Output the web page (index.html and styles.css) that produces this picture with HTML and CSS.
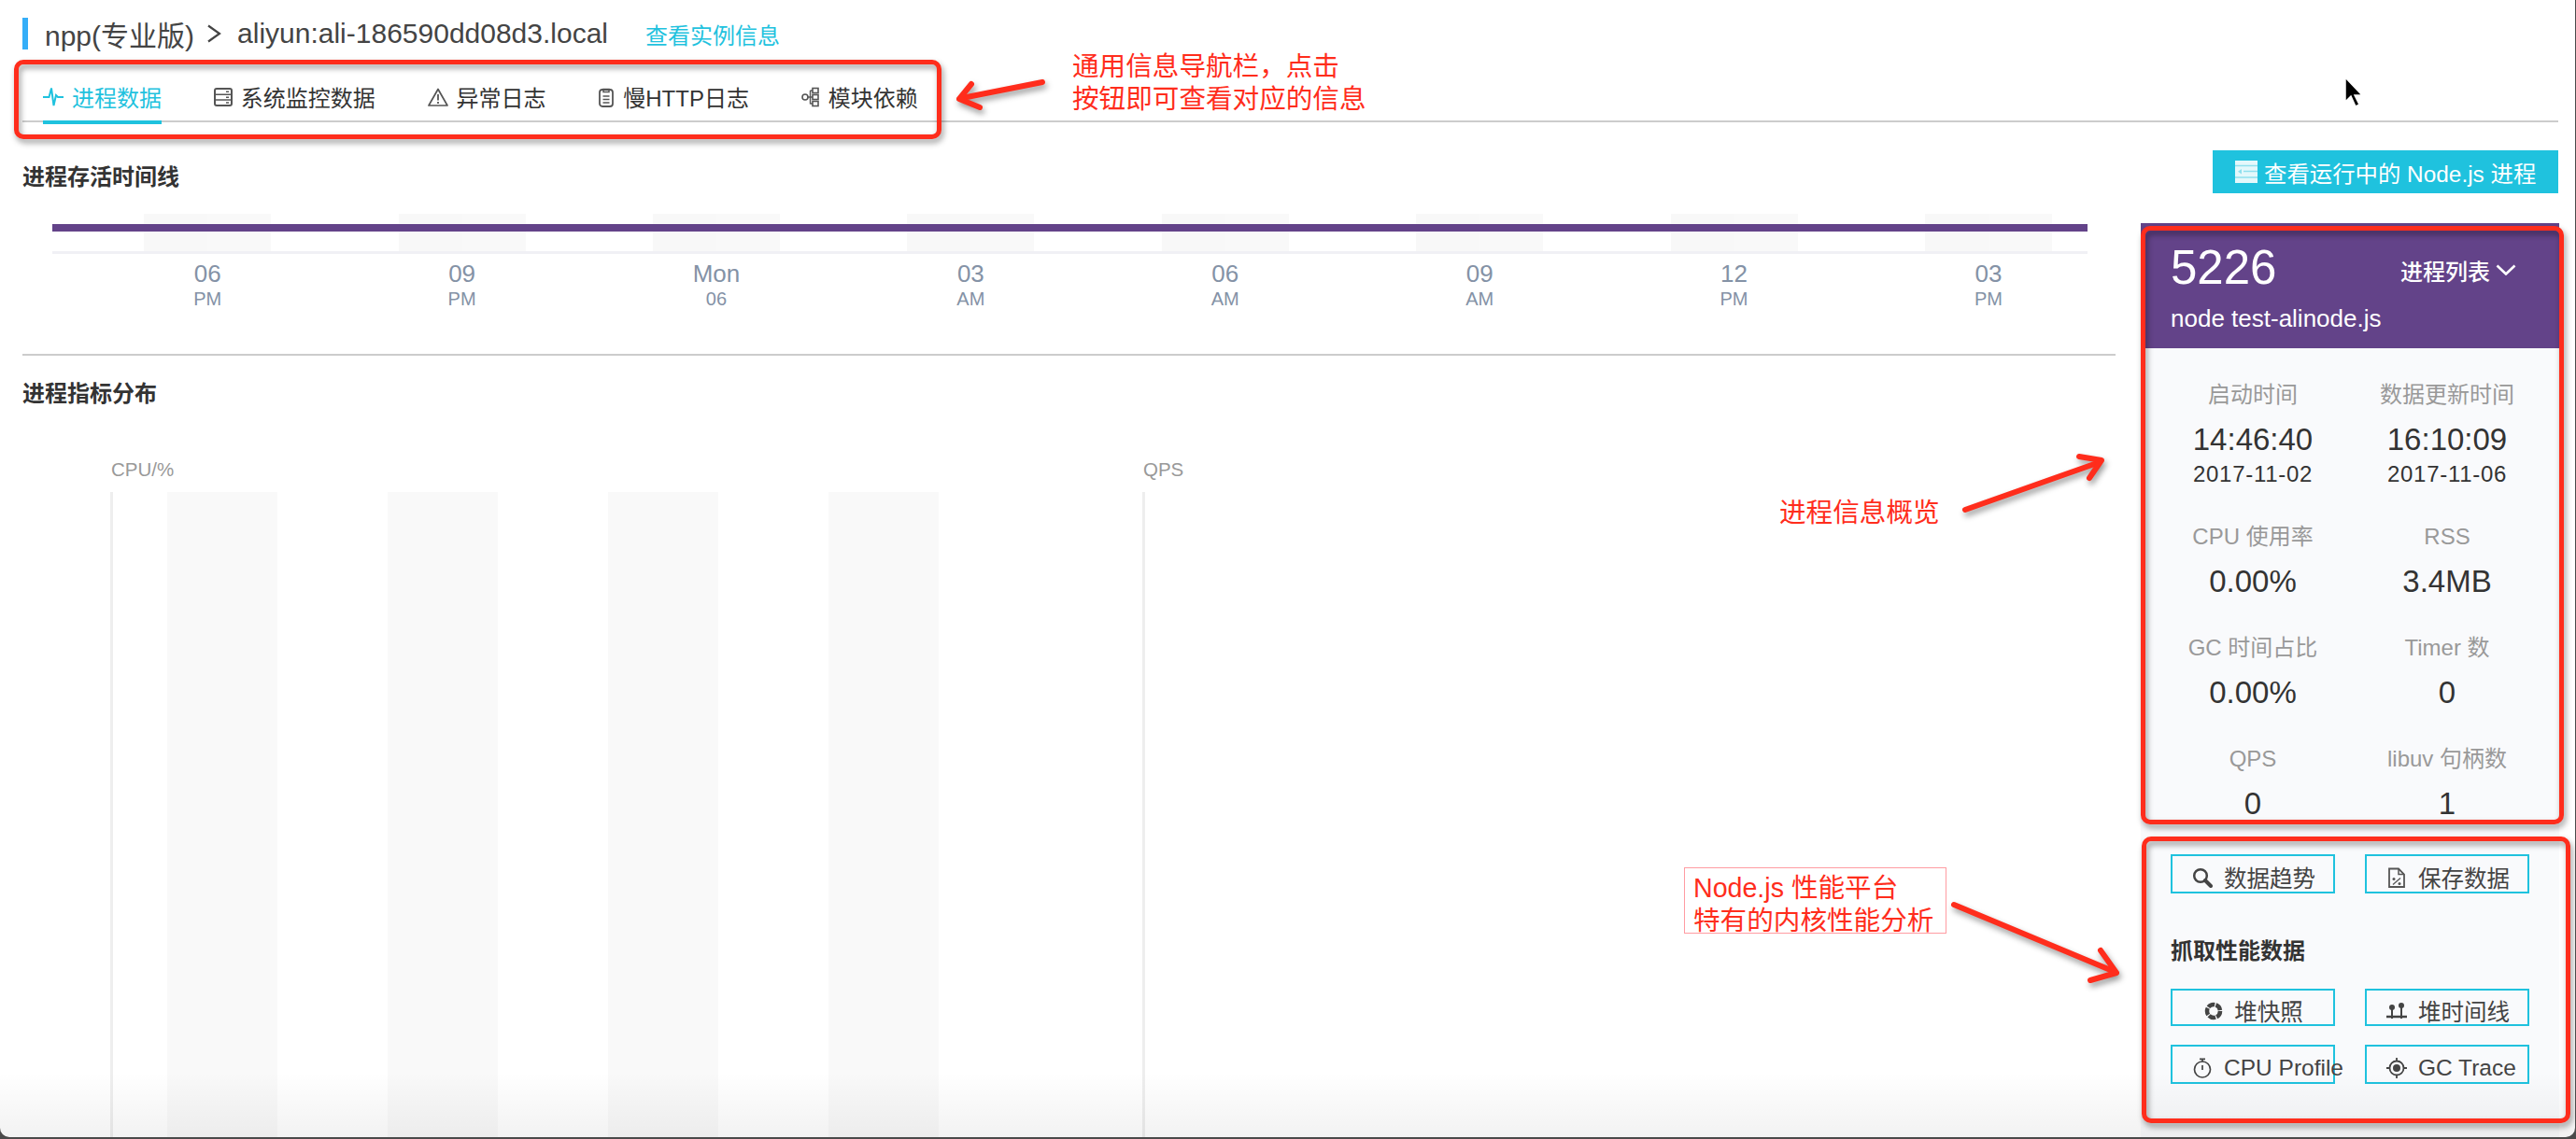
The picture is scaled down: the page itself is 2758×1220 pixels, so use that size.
FILE: index.html
```html
<!DOCTYPE html>
<html lang="zh-CN">
<head>
<meta charset="utf-8">
<title>npp(专业版)</title>
<link rel="stylesheet" href="styles.css">
</head>
<body>
<div class="win">
  <header class="crumb">
    <span class="crumb-app">npp(专业版)</span>
    <svg class="crumb-sep" width="16" height="20" viewBox="0 0 16 20"><path d="M2 1.500l12 8.500-12 8.500" fill="none" stroke="#444" stroke-width="2.200"/></svg>
    <span class="crumb-host">aliyun:ali-186590dd08d3.local</span>
    <a class="crumb-link">查看实例信息</a>
  </header>

  <nav class="tabs">
    <a class="tab active">
      <svg width="22" height="22" viewBox="0 0 22 22"><path d="M0 11H6.5L9 1.5L11.5 20L14 9l2 2h6" fill="none" stroke="#1fc2de" stroke-width="2"/></svg>
      进程数据</a>
    <a class="tab">
      <svg width="20" height="20" viewBox="0 0 20 20"><rect x="1" y="1" width="18" height="18" rx="2" fill="none" stroke="#555" stroke-width="2"/><path d="M1 7.3h18M1 13h18M13 4.2h3M13 10.2h3M13 16h3" fill="none" stroke="#555" stroke-width="1.6"/></svg>
      系统监控数据</a>
    <a class="tab">
      <svg width="22" height="20" viewBox="0 0 22 20"><path d="M11 1.5L21 19H1Z" fill="none" stroke="#555" stroke-width="1.7" stroke-linejoin="round"/><path d="M11 7v6.5M11 15v2" stroke="#555" stroke-width="1.8"/></svg>
      异常日志</a>
    <a class="tab">
      <svg width="18" height="22" viewBox="0 0 18 22"><rect x="2" y="3" width="14" height="18" rx="3" fill="none" stroke="#555" stroke-width="1.8"/><path d="M6 2.5h6v3H6zM5.5 10h7M5.5 13.5h7M5.5 17h7" fill="none" stroke="#555" stroke-width="1.5"/></svg>
      慢HTTP日志</a>
    <a class="tab">
      <svg width="20" height="22" viewBox="0 0 20 22"><circle cx="4" cy="11" r="3" fill="none" stroke="#555" stroke-width="1.6"/><rect x="12" y="1.5" width="6" height="5" fill="none" stroke="#555" stroke-width="1.6"/><rect x="12" y="8.5" width="6" height="5" fill="none" stroke="#555" stroke-width="1.6"/><rect x="12" y="15.5" width="6" height="5" fill="none" stroke="#555" stroke-width="1.6"/><path d="M7 11h5M9.5 4v14.5M9.5 4H12M9.5 18H12" fill="none" stroke="#555" stroke-width="1.4"/></svg>
      模块依赖</a>
  </nav>

  <div class="toolbar">
    <h2 class="heading toolbar-title">进程存活时间线</h2>
    <button class="run-btn">
      <svg width="24" height="24" viewBox="0 0 24 24"><rect width="24" height="24" fill="#e4f8fb"/><path d="M0 5.500h24M9 11.500h15M0 18h24" stroke="#8fe0ee" stroke-width="1.500"/><path d="M7 9v5.500l-4-2.750z" fill="#8fe0ee"/></svg>
      查看运行中的 Node.js 进程
    </button>
  </div>

  <div class="main">
    <section class="left">
      <div class="plot">
        <div class="time-grid">
          <i class="band"></i><i class="band"></i><i class="band"></i><i class="band"></i><i class="band"></i><i class="band"></i><i class="band"></i><i class="band"></i>
        </div>
        <div class="life-bar"></div>
      </div>
      <div class="time-grid ticks">
        <div class="tick"><b>06</b><span>PM</span></div>
        <div class="tick"><b>09</b><span>PM</span></div>
        <div class="tick"><b>Mon</b><span>06</span></div>
        <div class="tick"><b>03</b><span>AM</span></div>
        <div class="tick"><b>06</b><span>AM</span></div>
        <div class="tick"><b>09</b><span>AM</span></div>
        <div class="tick"><b>12</b><span>PM</span></div>
        <div class="tick"><b>03</b><span>PM</span></div>
      </div>
      <hr class="divider">
      <h2 class="heading">进程指标分布</h2>
      <div class="charts">
        <div class="chart">
          <div class="chart-label">CPU/%</div>
          <div class="chart-plot"><i class="cband"></i><i class="cband"></i><i class="cband"></i><i class="cband"></i></div>
        </div>
        <div class="chart">
          <div class="chart-label">QPS</div>
          <div class="chart-plot"></div>
        </div>
      </div>
    </section>

    <aside class="panel">
      <div class="proc">
        <div class="proc-top">
          <span class="pid">5226</span>
          <span class="proc-list">进程列表
            <svg width="22" height="12" viewBox="0 0 22 12"><path d="M1.500 1.500L11 10.500 20.500 1.500" fill="none" stroke="#fff" stroke-width="2.600"/></svg>
          </span>
        </div>
        <div class="proc-cmd">node test-alinode.js</div>
      </div>
      <div class="stats">
        <div class="stat"><div class="stat-k">启动时间</div><div class="stat-v">14:46:40</div><div class="stat-d">2017-11-02</div></div>
        <div class="stat"><div class="stat-k">数据更新时间</div><div class="stat-v">16:10:09</div><div class="stat-d">2017-11-06</div></div>
        <div class="stat"><div class="stat-k">CPU 使用率</div><div class="stat-v">0.00%</div></div>
        <div class="stat"><div class="stat-k">RSS</div><div class="stat-v">3.4MB</div></div>
        <div class="stat"><div class="stat-k">GC 时间占比</div><div class="stat-v">0.00%</div></div>
        <div class="stat"><div class="stat-k">Timer 数</div><div class="stat-v">0</div></div>
        <div class="stat"><div class="stat-k">QPS</div><div class="stat-v">0</div></div>
        <div class="stat"><div class="stat-k">libuv 句柄数</div><div class="stat-v">1</div></div>
      </div>
      <div class="actions">
        <div class="btn-row">
          <a class="btn">
            <svg width="22" height="22" viewBox="0 0 22 22"><circle cx="9" cy="9" r="6.800" fill="none" stroke="#444" stroke-width="2.500"/><path d="M14 14l6 6" stroke="#444" stroke-width="4" stroke-linecap="round"/></svg>
            <span>数据趋势</span></a>
          <a class="btn">
            <svg width="22" height="22" viewBox="0 0 22 22"><path d="M3 1.500h10l6 6V21H3z" fill="none" stroke="#555" stroke-width="1.800"/><path d="M13 1.500V7.500h6" fill="none" stroke="#555" stroke-width="1.500"/><circle cx="8" cy="12.500" r="1.500" fill="#555"/><circle cx="14" cy="17.500" r="1.500" fill="#555"/><path d="M7 18.500l8-7" stroke="#555" stroke-width="1.300"/></svg>
            <span>保存数据</span></a>
        </div>
        <h3 class="heading actions-title">抓取性能数据</h3>
        <div class="btn-row">
          <a class="btn btn-short">
            <svg width="22" height="22" viewBox="0 0 22 22"><circle cx="12" cy="11" r="7" fill="none" stroke="#444" stroke-width="4.500" stroke-dasharray="7.600 1.200"/></svg>
            <span>堆快照</span></a>
          <a class="btn btn-short">
            <svg width="22" height="22" viewBox="0 0 22 22"><path d="M0 17h22" stroke="#444" stroke-width="2.500"/><path d="M6 8v11M16 6v13" stroke="#444" stroke-width="2"/><circle cx="6" cy="7" r="3" fill="#444"/><circle cx="16" cy="5" r="3" fill="#444"/></svg>
            <span>堆时间线</span></a>
        </div>
        <div class="btn-row">
          <a class="btn">
            <svg width="22" height="22" viewBox="0 0 22 22"><circle cx="11" cy="12.500" r="8.500" fill="none" stroke="#444" stroke-width="1.700"/><path d="M8 1.300h6M11 1.300v3M11 8v5" fill="none" stroke="#444" stroke-width="1.700"/></svg>
            <span>CPU Profile</span></a>
          <a class="btn">
            <svg width="22" height="22" viewBox="0 0 22 22"><circle cx="11" cy="11" r="7.500" fill="none" stroke="#444" stroke-width="1.800"/><circle cx="11" cy="11" r="4" fill="#444"/><path d="M11 0v4M11 18v4M0 11h4M18 11h4" stroke="#444" stroke-width="1.800"/></svg>
            <span>GC Trace</span></a>
        </div>
      </div>
    </aside>
  </div>

  <div class="fade"></div>

  <div class="mark mark-nav"></div>
  <div class="mark mark-stats"></div>
  <div class="mark mark-actions"></div>

  <svg class="arrows" width="2758" height="1220" viewBox="0 0 2758 1220">
    <g fill="none" stroke="#ff2d1c" stroke-width="6" stroke-linecap="round" stroke-linejoin="round">
      <path d="M1116 88L1030 105"/>
      <path d="M1040 90L1027 106 1049 115"/>
      <path d="M2104 546L2248 495"/>
      <path d="M2226 489L2250 493 2237 512"/>
      <path d="M2092 969L2262 1040"/>
      <path d="M2249 1018L2266 1042 2238 1050"/>
    </g>
  </svg>

  <div class="note note-nav">通用信息导航栏，点击<br>按钮即可查看对应的信息</div>
  <div class="note note-stats">进程信息概览</div>
  <div class="note note-perf">Node.js 性能平台<br>特有的内核性能分析</div>

  <svg class="cursor" width="22" height="34" viewBox="0 0 22 34"><path d="M2 1v26l6-6 5 11 4-2-5-10h8z" fill="#000" stroke="#fff" stroke-width="1.500"/></svg>
</div>
</body>
</html>
```
FILE: styles.css
```css
* { box-sizing: border-box; }
html, body { margin: 0; height: 100%; }
body {
  background: #4a4a4a;
  font-family: "Liberation Sans", "Noto Sans CJK SC", sans-serif;
  color: #333;
  overflow: hidden;
}
.win {
  position: relative;
  width: 2757px;
  height: 1218px;
  background: #fff;
  border-radius: 0 0 10px 10px;
  overflow: hidden;
  padding-top: 19px;
}

.crumb {
  display: flex;
  align-items: center;
  height: 34px;
  margin-left: 24px;
  padding-left: 18px;
  border-left: 6px solid #35aef8;
  font-size: 30px;
  color: #444;
}
.crumb-sep { margin: 0 17px 0 13px; }
.crumb-link { margin-left: 40px; font-size: 24px; color: #1fc2de; }

.tabs {
  display: flex;
  gap: 55.75px;
  height: 53px;
  margin: 25px 18px 0 24px;
  padding-left: 22px;
  border-bottom: 2px solid #ccc;
}
.tab {
  display: flex;
  align-items: center;
  gap: 9px;
  height: 55px;
  border-bottom: 4px solid transparent;
  font-size: 24px;
  color: #333;
}
.tab.active { color: #1fc2de; border-bottom-color: #1fc2de; }

.toolbar {
  display: flex;
  justify-content: space-between;
  align-items: center;
  height: 46px;
  margin: 30px 18px 0 24px;
}
.heading { margin: 0; font-size: 24px; line-height: 34px; font-weight: 700; color: #333; }
.toolbar-title { padding-top: 12px; }
.run-btn {
  display: flex;
  align-items: center;
  gap: 7px;
  width: 370px;
  height: 46px;
  padding: 0 0 0 24px;
  border: 0;
  background: #1fc2de;
  color: #fff;
  font: inherit;
  font-size: 24.4px;
  white-space: nowrap;
}

.main {
  display: grid;
  grid-template-columns: 2241px 448px;
  column-gap: 27px;
  margin-left: 24px;
}
.left { padding-top: 22px; }
.plot {
  position: relative;
  width: 2179px;
  height: 43px;
  margin-left: 32px;
  border-bottom: 3px solid #f0f0f5;
}
.time-grid {
  display: grid;
  grid-template-columns: repeat(8, 272.4px);
  padding-left: 30px;
}
.band {
  display: block;
  width: 136px;
  height: 40px;
  justify-self: center;
  background: linear-gradient(90deg, #f8f8f8 50%, #f9f9f9 50%);
}
.life-bar {
  position: absolute;
  left: 0;
  right: 0;
  top: 11px;
  height: 8px;
  background: #634389;
}
.ticks { margin-left: 32px; padding-top: 6px; }
.tick { text-align: center; color: #8492a6; }
.tick b { display: block; font-weight: 400; font-size: 26px; line-height: 30px; }
.tick span { display: block; font-size: 20px; line-height: 24px; }
.divider { height: 2px; margin: 47px 0 24px; border: 0; background: #ccc; }

.charts {
  display: grid;
  grid-template-columns: 1105px 1fr;
  padding-left: 94px;
  margin-top: 52px;
}
.chart-label { padding-left: 1px; font-size: 20.5px; line-height: 24px; color: #999; }
.chart-plot {
  display: flex;
  gap: 118px;
  height: 700px;
  margin-top: 12px;
  padding-left: 58px;
  border-left: 3px solid #eee;
}
.cband { display: block; width: 118px; background: #f9f9f9; }

.panel { margin-top: 32px; height: 979px; background: #f9fafc; }
.proc { height: 134px; padding: 18px 46px 0 32px; background: #634389; color: #fff; }
.proc-top { display: flex; justify-content: space-between; align-items: center; height: 60px; }
.pid { font-size: 51px; line-height: 60px; }
.proc-list {
  display: flex;
  align-items: center;
  gap: 6px;
  font-size: 24px;
  font-weight: 500;
  padding-top: 4px;
}
.proc-cmd { margin-top: 7px; font-size: 26px; line-height: 34px; }

.stats {
  display: grid;
  grid-template-columns: 176px 176px;
  column-gap: 32px;
  row-gap: 34px;
  padding: 33px 32px 0;
}
.stat { text-align: center; white-space: nowrap; }
.stat-k { font-size: 24px; line-height: 34px; color: #999; }
.stat-v { margin-top: 11px; font-size: 33px; line-height: 40px; color: #333; }
.stat-d { font-size: 24px; line-height: 33px; color: #333; letter-spacing: .7px; }

.actions { padding: 34px 32px 0; }
.btn-row { display: grid; grid-template-columns: 176px 176px; column-gap: 32px; margin-bottom: 20px; }
.btn {
  display: flex;
  justify-content: safe center;
  align-items: center;
  gap: 12px;
  height: 42px;
  padding: 7px 21px 0;
  border: 2px solid #1fc2de;
  font-size: 24.5px;
  color: #444;
  white-space: nowrap;
}
.btn-short { height: 40px; }
.btn svg, .btn span { flex: none; }
.actions-title { margin: 45px 0 23px; }

.fade {
  position: absolute;
  left: 0;
  right: 0;
  bottom: 0;
  height: 70px;
  background: linear-gradient(rgba(0,0,0,0), rgba(0,0,0,.05));
}

.mark {
  position: absolute;
  border: 5px solid #ff2d1c;
  border-radius: 10px;
  filter: drop-shadow(2px 4px 3px rgba(0,0,0,.4));
}
.mark-nav { left: 15px; top: 64px; width: 993px; height: 85px; }
.mark-stats { left: 2292px; top: 242px; width: 453px; height: 641px; }
.mark-actions { left: 2293px; top: 896px; width: 459px; height: 307px; }

.arrows {
  position: absolute;
  left: 0;
  top: 0;
  filter: drop-shadow(2px 4px 3px rgba(0,0,0,.4));
}

.note {
  position: absolute;
  font-size: 28.6px;
  line-height: 35px;
  color: #ff2d1c;
  white-space: nowrap;
}
.note-nav { left: 1148px; top: 54px; }
.note-stats { left: 1905px; top: 532px; }
.note-perf {
  left: 1803px;
  top: 929px;
  width: 281px;
  height: 71px;
  padding: 4px 0 0 9px;
  border: 1px solid rgba(255, 90, 100, .6);
}

.cursor { position: absolute; left: 2509px; top: 82px; }
```
